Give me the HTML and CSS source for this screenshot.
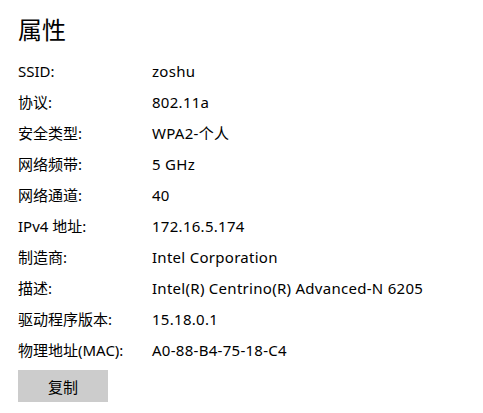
FILE: index.html
```html
<!DOCTYPE html>
<html lang="zh-CN">
<head>
<meta charset="utf-8">
<link rel="stylesheet" href="styles.css">
</head>
<body>
<div class="page">
  <h1 class="title">属性</h1>
  <div class="props">
    <div class="label">SSID:</div><div class="value">zoshu</div>
    <div class="label">协议:</div><div class="value">802.11a</div>
    <div class="label">安全类型:</div><div class="value">WPA2-个人</div>
    <div class="label">网络频带:</div><div class="value">5 GHz</div>
    <div class="label">网络通道:</div><div class="value">40</div>
    <div class="label">IPv4 地址:</div><div class="value">172.16.5.174</div>
    <div class="label">制造商:</div><div class="value">Intel Corporation</div>
    <div class="label">描述:</div><div class="value">Intel(R) Centrino(R) Advanced-N 6205</div>
    <div class="label">驱动程序版本:</div><div class="value">15.18.0.1</div>
    <div class="label">物理地址(MAC):</div><div class="value">A0-88-B4-75-18-C4</div>
  </div>
  <button class="copy">复制</button>
</div>
</body>
</html>
```
FILE: styles.css
```css
html, body {
  margin: 0;
  padding: 0;
  background: #fff;
}
body {
  font-family: "Noto Sans", "Noto Sans CJK SC", sans-serif;
  color: #000;
}
.page {
  padding: 12px 18px 0 18px;
}
.title {
  margin: 0;
  font-family: "Noto Sans CJK SC", sans-serif;
  font-weight: 400;
  font-size: 24px;
  line-height: 34px;
}
.props {
  margin-top: 9px;
  display: grid;
  grid-template-columns: 134px auto;
  grid-auto-rows: 31px;
  font-size: 15px;
  align-items: center;
}
.label, .value {
  white-space: nowrap;
}
.value {
  letter-spacing: 0.28px;
}
.copy {
  display: block;
  margin-top: 5px;
  width: 90px;
  height: 32px;
  border: none;
  background: #cccccc;
  color: #000;
  font-family: "Noto Sans CJK SC", sans-serif;
  font-size: 15px;
  padding: 0;
}
```
